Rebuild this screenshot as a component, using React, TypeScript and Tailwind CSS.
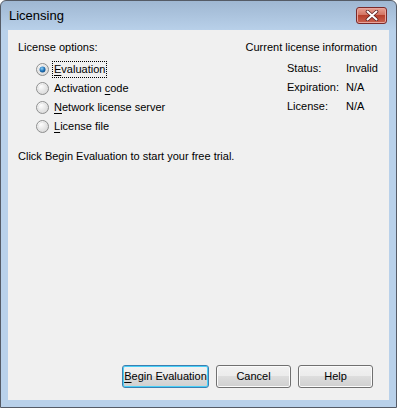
import React, { useState } from 'react';

const options = [
    { id: 'evaluation', pre: '', key: 'E', rest: 'valuation' },
    { id: 'activation', pre: 'Activation ', key: 'c', rest: 'ode' },
    { id: 'network', pre: '', key: 'N', rest: 'etwork license server' },
    { id: 'file', pre: '', key: 'L', rest: 'icense file' },
];

function Radio({ checked }: { checked: boolean }) {
    return (
        <svg width="13" height="13" viewBox="0 0 13 13" className="shrink-0">
            <defs>
                <radialGradient id="rbg" cx="0.35" cy="0.3" r="0.8">
                    <stop offset="0" stopColor="#ffffff" />
                    <stop offset="1" stopColor="#d4d4d4" />
                </radialGradient>
                <radialGradient id="rdot" cx="0.4" cy="0.35" r="0.7">
                    <stop offset="0" stopColor="#8fd0f5" />
                    <stop offset="0.6" stopColor="#1d71b8" />
                    <stop offset="1" stopColor="#114a80" />
                </radialGradient>
            </defs>
            <circle cx="6.5" cy="6.5" r="6" fill="url(#rbg)" stroke="#8e8f8f" strokeWidth="1" />
            <circle cx="6.5" cy="6.5" r="4.2" fill="none" stroke="#e2e2e2" strokeWidth="0.8" />
            {checked && <circle cx="6.5" cy="6.5" r="3" fill="url(#rdot)" />}
        </svg>
    );
}

function WinButton({ children, primary, wide }: { children: React.ReactNode; primary?: boolean; wide?: boolean }) {
    return (
        <button
            className={
                'h-[23px] rounded-[3px] border text-[11px] text-black leading-none whitespace-nowrap bg-[linear-gradient(#f2f2f2_0%,#ebebeb_50%,#dddddd_50%,#cfcfcf_100%)] ' +
                (wide ? 'w-[87px] ' : 'w-[75px] ') +
                (primary
                    ? 'border-[#3c7fb1] shadow-[inset_0_0_0_1px_#48d0f8]'
                    : 'border-[#707070] shadow-[inset_0_0_0_1px_#fbfbfb]')
            }
        >
            {children}
        </button>
    );
}

export default function App() {
    const [selected, setSelected] = useState('evaluation');

    return (
        <div className="w-[397px] h-[408px] flex flex-col rounded-t-[6px] border border-[#555b66] bg-[linear-gradient(#9fb7d2_0px,#b9d1ea_30px,#b9d1ea_100%)] font-['Liberation_Sans',sans-serif] text-black">
            <div className="h-[29px] flex items-center justify-between pl-[8px] pr-[9px] shrink-0">
                <span className="text-[13px] pt-[1px]">Licensing</span>
                <button className="w-[31px] h-[17px] mb-[1px] rounded-[3px] border border-[#7b2a2a] flex items-center justify-center shadow-[inset_0_0_0_1px_#e8a59c] bg-[linear-gradient(#e8a193_0%,#d0705e_50%,#b7402c_50%,#c96250_100%)]">
                    <svg width="14" height="11" viewBox="0 0 14 11">
                        <path d="M2.5 1.5 L11.5 9.5 M11.5 1.5 L2.5 9.5" stroke="#5a2020" strokeWidth="3.6" strokeLinecap="round" />
                        <path d="M2.5 1.5 L11.5 9.5 M11.5 1.5 L2.5 9.5" stroke="#ffffff" strokeWidth="2" strokeLinecap="round" />
                    </svg>
                </button>
            </div>
            <div className="flex-1 mx-[7px] mb-[7px] bg-[#f0f0f0] flex flex-col pl-[10px] pr-[12px] pt-[10px] pb-[12px] text-[11px] leading-[15px]">
                <div className="flex justify-between">
                    <div className="flex flex-col">
                        <div className="h-[15px]">License options:</div>
                        <div className="flex flex-col pl-[18px] pt-[7px] gap-[4px]">
                            {options.map((o) => (
                                <label key={o.id} className="h-[15px] flex items-center gap-[4px]" onClick={() => setSelected(o.id)}>
                                    <Radio checked={selected === o.id} />
                                    <span className={'px-[1px] ' + (o.id === 'evaluation' ? 'outline outline-1 outline-dotted outline-black' : '')}>
                                        {o.pre}
                                        <span className="underline underline-offset-[2px]">{o.key}</span>
                                        {o.rest}
                                    </span>
                                </label>
                            ))}
                        </div>
                    </div>
                    <div className="flex flex-col items-end">
                        <div className="h-[15px]">Current license information</div>
                        <div className="grid grid-cols-[59px_31px] gap-y-[4px] pt-[6px]">
                            <span>Status:</span>
                            <span>Invalid</span>
                            <span>Expiration:</span>
                            <span>N/A</span>
                            <span>License:</span>
                            <span>N/A</span>
                        </div>
                    </div>
                </div>
                <div className="mt-[15px]">Click Begin Evaluation to start your free trial.</div>
                <div className="flex-1" />
                <div className="flex justify-end gap-[7px] pr-[4px]">
                    <WinButton primary wide>
                        <span className="underline underline-offset-[2px]">B</span>egin Evaluation
                    </WinButton>
                    <WinButton>Cancel</WinButton>
                    <WinButton>Help</WinButton>
                </div>
            </div>
        </div>
    );
}
